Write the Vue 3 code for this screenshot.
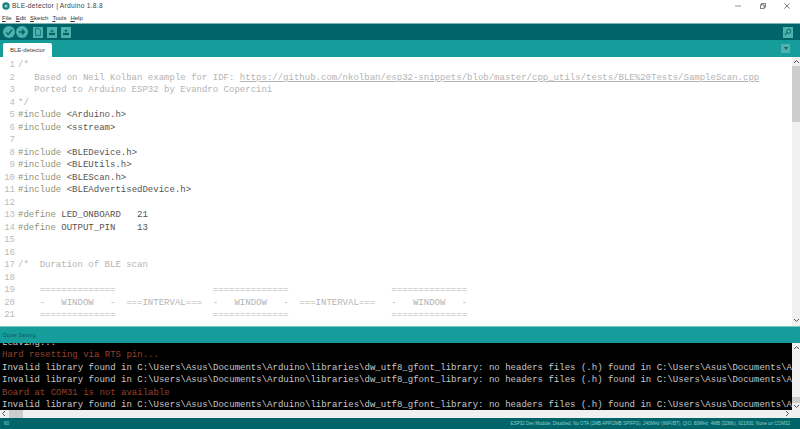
<script setup>
const W = (a, s = ' ') => s.repeat(a)
const sep = W(4) + W(14, '=') + W(18) + W(14, '=') + W(19) + W(14, '=')
const mid = W(4) + '-' + W(3) + 'WINDOW' + W(3) + '-' + W(2) + '===INTERVAL===' + W(2) + '-' + W(3) + 'WINDOW' + W(3) + '-' + W(2) + '===INTERVAL===' + W(3) + '-' + W(3) + 'WINDOW' + W(3) + '-'

const lines = [
  [['c', '/*']],
  [['c', '   Based on Neil Kolban example for IDF: '], ['u', 'https://github.com/nkolban/esp32-snippets/blob/master/cpp_utils/tests/BLE%20Tests/SampleScan.cpp']],
  [['c', '   Ported to Arduino ESP32 by Evandro Copercini']],
  [['c', '*/']],
  [['k', '#include'], ['t', ' <Arduino.h>']],
  [['k', '#include'], ['t', ' <sstream>']],
  [],
  [['k', '#include'], ['t', ' <BLEDevice.h>']],
  [['k', '#include'], ['t', ' <BLEUtils.h>']],
  [['k', '#include'], ['t', ' <BLEScan.h>']],
  [['k', '#include'], ['t', ' <BLEAdvertisedDevice.h>']],
  [],
  [['k', '#define'], ['t', ' LED_ONBOARD   21']],
  [['k', '#define'], ['t', ' OUTPUT_PIN    13']],
  [],
  [],
  [['c', '/*  Duration of BLE scan']],
  [],
  [['c', sep]],
  [['c', mid]],
  [['c', sep]],
]

const P = 'C:\\Users\\Asus\\Documents\\Arduino\\libraries\\dw_utf8_gfont_library'
const inv = `Invalid library found in ${P}: no headers files (.h) found in C:\\Users\\Asus\\Documents\\Arduino\\libraries`
const consoleLines = [
  ['w', 'Leaving...'],
  ['r', 'Hard resetting via RTS pin...'],
  ['w', inv],
  ['w', inv],
  ['r', 'Board at COM31 is not available'],
  ['w', inv],
]
</script>

<template>
  <div class="win">
    <header class="title">
      <svg class="logo" width="8" height="8" viewBox="0 0 10 10">
        <circle cx="5" cy="5" r="4.6" fill="#17807f" />
        <circle cx="5" cy="5" r="2" fill="#8fd0cc" />
      </svg>
      <span class="title-text">BLE-detector | Arduino 1.8.8</span>
      <div class="controls">
        <svg width="6" height="6" viewBox="0 0 8 8"><path d="M0 4h8" stroke="#777" fill="none" /></svg>
        <svg width="6" height="6" viewBox="0 0 8 8"><path d="M.5 2.500h5v5h-5zM2 2.500V.5h5.500v5h-2" stroke="#444" fill="none" /></svg>
        <svg width="6" height="6" viewBox="0 0 8 8"><path d="M.5.500l7 7M7.500.5l-7 7" stroke="#555" fill="none" /></svg>
      </div>
    </header>
    <nav class="menu">
      <span><u>F</u>ile</span><span><u>E</u>dit</span><span><u>S</u>ketch</span><span><u>T</u>ools</span><span><u>H</u>elp</span>
    </nav>
    <div class="toolbar">
      <button class="round">
        <svg width="8" height="8" viewBox="0 0 10 10"><path d="M1.500 5.500l2.500 2.500 5-6" stroke="#0a6265" stroke-width="1.800" fill="none" /></svg>
      </button>
      <button class="round">
        <svg width="8" height="8" viewBox="0 0 10 10"><path d="M1 5h6M5 2l3 3-3 3" stroke="#0a6265" stroke-width="1.800" fill="none" /></svg>
      </button>
      <button class="square first">
        <svg width="6" height="8" viewBox="0 0 8 10"><path d="M.5.500h4.500l2.500 2.500v6.500h-7z" stroke="#0a6265" fill="none" /></svg>
      </button>
      <button class="square">
        <svg width="6" height="7" viewBox="0 0 8 9"><path d="M1.500 3.500L4 .5l2.500 3z" fill="#0a6265" /><path d="M0 5h8v3H0z" fill="#0a6265" /></svg>
      </button>
      <button class="square">
        <svg width="6" height="7" viewBox="0 0 8 9"><path d="M1.500 1h5L4 4z" fill="#0a6265" /><path d="M0 5h8v3H0z" fill="#0a6265" /></svg>
      </button>
      <button class="square monitor">
        <svg width="8" height="8" viewBox="0 0 11 11"><circle cx="6.500" cy="4.500" r="2.800" stroke="#0a6265" stroke-width="1.300" fill="none" /><path d="M4.500 6.500L1.500 9.500" stroke="#0a6265" stroke-width="1.500" /></svg>
      </button>
    </div>
    <div class="tabs">
      <div class="tab">BLE-detector</div>
      <div class="tab-menu"><i></i></div>
    </div>
    <main class="editor">
      <div class="code">
        <div v-for="(line, i) in lines" :key="i" class="line">
          <span class="no">{{ i + 1 }}</span>
          <span class="src"><span v-for="(seg, j) in line" :key="j" :class="seg[0]">{{ seg[1] }}</span></span>
        </div>
      </div>
      <div class="vbar">
        <svg width="7" height="5" viewBox="0 0 7 5"><path d="M1 4l2.500-2.500L6 4" stroke="#555" fill="none" /></svg>
        <div class="thumb big"></div>
        <div class="spacer"></div>
        <svg width="7" height="5" viewBox="0 0 7 5"><path d="M1 1l2.500 2.500L6 1" stroke="#555" fill="none" /></svg>
      </div>
    </main>
    <div class="status">Done Saving.</div>
    <section class="console">
      <div class="output">
        <div v-for="(l, i) in consoleLines" :key="i" :class="['cl', l[0]]">{{ l[1] }}</div>
      </div>
      <div class="vbar dark">
        <svg width="7" height="5" viewBox="0 0 7 5"><path d="M1 4l2.500-2.500L6 4" stroke="#555" fill="none" /></svg>
        <div class="spacer"></div>
        <div class="thumb small"></div>
        <svg width="7" height="5" viewBox="0 0 7 5"><path d="M1 1l2.500 2.500L6 1" stroke="#555" fill="none" /></svg>
      </div>
    </section>
    <div class="hbar">
      <svg width="5" height="7" viewBox="0 0 5 7"><path d="M4 1L1.500 3.500 4 6" stroke="#555" fill="none" /></svg>
      <div class="hthumb"></div>
      <div class="spacer"></div>
      <svg width="5" height="7" viewBox="0 0 5 7"><path d="M1 1l2.500 2.500L1 6" stroke="#555" fill="none" /></svg>
    </div>
    <footer class="foot">
      <span>60</span>
      <span>ESP32 Dev Module, Disabled, No OTA (2MB APP/2MB SPIFFS), 240MHz (WiFi/BT), QIO, 80MHz, 4MB (32Mb), 921600, None on COM32</span>
    </footer>
  </div>
</template>

<style>
html, body { margin: 0; background: #fff; overflow: hidden; }
</style>

<style scoped>
.win { width: 800px; height: 429px; display: flex; flex-direction: column; background: #fff; overflow: hidden; font-family: "Liberation Sans", sans-serif; }
.title { height: 12px; display: flex; align-items: center; padding: 0 0 0 2px; font-size: 6.700px; letter-spacing: 0.250px; color: #444; }
.logo { margin-right: 2px; }
.controls { margin-left: auto; display: flex; gap: 18.500px; padding-right: 10px; align-items: center; }
.menu { height: 10px; padding: 0 0 0 2px; display: flex; gap: 4px; font-size: 6px; line-height: 10px; color: #333; align-items: center; margin-top: 1px; }
.toolbar { height: 17px; background: #006468; border-top: 1px solid #7fb5b3; display: flex; align-items: center; padding: 0 0 0 3px; gap: 1px; }
.toolbar button { padding: 0; border: 0; display: flex; align-items: center; justify-content: center; background: #4db1ad; }
.round { width: 12px; height: 12px; border-radius: 50%; }
.square { width: 10px; height: 11px; margin-left: 3px; }
.square.first { margin-left: 4px; }
.square.monitor { margin-left: auto; margin-right: 7px; }
.tabs { height: 17px; background: #179c9c; display: flex; align-items: flex-end; padding-left: 3px; }
.tab { width: 49px; height: 14px; background: #fff; font-size: 6px; line-height: 14px; text-align: center; color: #444; border-radius: 2px 2px 0 0; }
.tab-menu { margin-left: auto; margin-right: 10px; width: 9px; height: 9px; align-self: center; background: #4db1ad; display: flex; align-items: center; justify-content: center; }
.tab-menu i { width: 0; height: 0; border-left: 2.500px solid transparent; border-right: 2.500px solid transparent; border-top: 3px solid #0a6265; }
.editor { height: 269px; flex: none; display: flex; background: #fff; overflow: hidden; }
.code { flex: 1; min-width: 0; padding-top: 2.500px; overflow: hidden; font-family: "Liberation Mono", monospace; font-size: 9.030px; line-height: 12.500px; }
.line { height: 12.500px; display: flex; white-space: pre; }
.no { width: 15px; flex: none; text-align: right; color: #bbb; }
.src { margin-left: 3px; }
.c { color: #b4b4b4; }
.u { color: #b4b4b4; text-decoration: underline; }
.k { color: #8e9378; }
.t { color: #555; }
.vbar { width: 8px; flex: none; background: #f0f0f0; display: flex; flex-direction: column; align-items: center; padding: 2px 0 3px; box-sizing: border-box; }
.thumb { width: 100%; background: #cdcdcd; }
.thumb.big { height: 56px; margin-top: 2px; }
.status { height: 17px; flex: none; box-sizing: border-box; border-top: 1px solid #7fc5c2; background: #179c9c; padding: 1px 0 0 3px; font-size: 5.700px; line-height: 15px; color: #0a5e60; }
.console { height: 67px; flex: none; display: flex; background: #000; overflow: hidden; }
.output { flex: 1; min-width: 0; overflow: hidden; font-family: "Liberation Mono", monospace; font-size: 9.030px; line-height: 12.500px; white-space: pre; padding-left: 2px; }
.cl { height: 12.500px; }
.cl:first-child { margin-top: -6px; }
.cl.w { color: #c8c8c8; }
.cl.r { color: #96402f; }
.vbar.dark { padding-bottom: 1px; }
.spacer { flex: 1; }
.thumb.small { height: 6px; margin-bottom: 1px; }
.hbar { height: 8px; flex: none; background: #f0f0f0; display: flex; align-items: center; padding: 0 10px 0 1px; }
.hthumb { width: 14px; height: 100%; background: #cdcdcd; margin-left: 3px; }
.foot { height: 11px; flex: none; background: #006468; color: #8fd0cc; font-size: 4.550px; line-height: 12px; display: flex; justify-content: space-between; padding: 0 10px 0 4px; white-space: nowrap; }
</style>
